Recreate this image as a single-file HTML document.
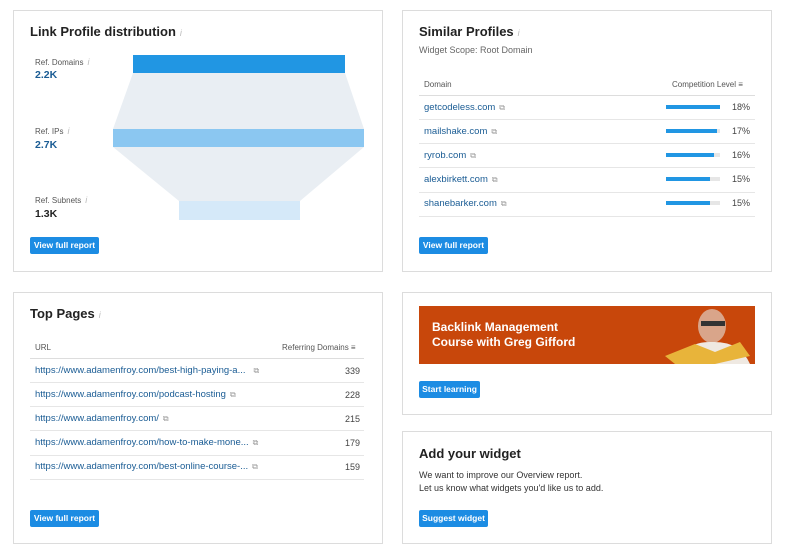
<!DOCTYPE html>
<html><head><style>
*{margin:0;padding:0;box-sizing:border-box}
body{width:790px;height:560px;background:#fff;font-family:"Liberation Sans",sans-serif;color:#333;position:relative;overflow:hidden}
.card{position:absolute;border:1px solid #dcdcdc;background:#fff}
.a{position:absolute;white-space:nowrap}
.t{font-size:13px;font-weight:bold;color:#222}
.i{color:#bbb;font-size:9px;font-style:italic;font-weight:normal;margin-left:4px}
.btn{position:absolute;background:#1c8ce3;color:#fff;font-size:8.5px;font-weight:bold;border-radius:2px;text-align:center;line-height:17px;height:17px}
.s{font-size:8px;color:#555}
.v{font-size:10.5px;font-weight:bold;color:#1a5c94}
.lk{font-size:9.5px;color:#1a5c94}
.ln{position:absolute;height:1px;background:#e6e6e6}
.ex{color:#999;font-size:8px;margin-left:4px}
.n{font-size:9px;color:#444;text-align:right}
</style></head><body>

<div class="card" style="left:13px;top:10px;width:370px;height:262px"></div>
<div class="a t" style="left:30px;top:24px">Link Profile distribution<span class="i">i</span></div>
<div class="a s" style="left:35px;top:57px">Ref. Domains<span class="i">i</span></div>
<div class="a v" style="left:35px;top:69px">2.2K</div>
<div class="a s" style="left:35px;top:126px">Ref. IPs<span class="i">i</span></div>
<div class="a v" style="left:35px;top:139px">2.7K</div>
<div class="a s" style="left:35px;top:195px">Ref. Subnets<span class="i">i</span></div>
<div class="a v" style="left:35px;top:208px;color:#222">1.3K</div>
<svg class="a" style="left:0;top:0" width="400" height="280">
<polygon points="133,73 345,73 364,129 113,129" fill="#e9eef3"/>
<polygon points="113,147 364,147 300,201 179,201" fill="#e9eef3"/>
<rect x="133" y="55" width="212" height="18" fill="#2196e3"/>
<rect x="113" y="129" width="251" height="18" fill="#8bc7f1"/>
<rect x="179" y="201" width="121" height="19" fill="#d5e9f9"/>
</svg>
<div class="btn" style="left:30px;top:237px;width:69px">View full report</div>

<div class="card" style="left:402px;top:10px;width:370px;height:262px"></div>
<div class="a t" style="left:419px;top:24px">Similar Profiles<span class="i">i</span></div>
<div class="a" style="left:419px;top:45px;font-size:9px;color:#666">Widget Scope: Root Domain</div>
<div class="a s" style="left:424px;top:80px">Domain</div>
<div class="a s" style="left:672px;top:80px">Competition Level ≡</div>
<div class="ln" style="left:419px;top:95px;width:336px;background:#ddd"></div>
<div class="a lk" style="left:424px;top:102px">getcodeless.com<span class="ex">⧉</span></div>
<div class="a lk" style="left:424px;top:126px">mailshake.com<span class="ex">⧉</span></div>
<div class="a lk" style="left:424px;top:150px">ryrob.com<span class="ex">⧉</span></div>
<div class="a lk" style="left:424px;top:174px">alexbirkett.com<span class="ex">⧉</span></div>
<div class="a lk" style="left:424px;top:198px">shanebarker.com<span class="ex">⧉</span></div>
<div class="ln" style="left:419px;top:119px;width:336px"></div>
<div class="ln" style="left:419px;top:143px;width:336px"></div>
<div class="ln" style="left:419px;top:167px;width:336px"></div>
<div class="ln" style="left:419px;top:192px;width:336px"></div>
<div class="ln" style="left:419px;top:216px;width:336px"></div>
<svg class="a" style="left:666px;top:0" width="60" height="220">
<rect x="0" y="105" width="54" height="4" fill="#e6e6e6"/><rect x="0" y="105" width="54" height="4" fill="#2196e3"/>
<rect x="0" y="129" width="54" height="4" fill="#e6e6e6"/><rect x="0" y="129" width="51" height="4" fill="#2196e3"/>
<rect x="0" y="153" width="54" height="4" fill="#e6e6e6"/><rect x="0" y="153" width="48" height="4" fill="#2196e3"/>
<rect x="0" y="177" width="54" height="4" fill="#e6e6e6"/><rect x="0" y="177" width="44" height="4" fill="#2196e3"/>
<rect x="0" y="201" width="54" height="4" fill="#e6e6e6"/><rect x="0" y="201" width="44" height="4" fill="#2196e3"/>
</svg>
<div class="a n" style="left:725px;top:102px;width:25px">18%</div>
<div class="a n" style="left:725px;top:126px;width:25px">17%</div>
<div class="a n" style="left:725px;top:150px;width:25px">16%</div>
<div class="a n" style="left:725px;top:174px;width:25px">15%</div>
<div class="a n" style="left:725px;top:198px;width:25px">15%</div>
<div class="btn" style="left:419px;top:237px;width:69px">View full report</div>

<div class="card" style="left:13px;top:292px;width:370px;height:252px"></div>
<div class="a t" style="left:30px;top:306px">Top Pages<span class="i">i</span></div>
<div class="a s" style="left:35px;top:343px">URL</div>
<div class="a s" style="left:282px;top:343px">Referring Domains ≡</div>
<div class="ln" style="left:30px;top:358px;width:334px;background:#ddd"></div>
<div class="a lk" style="left:35px;top:365px">https://www.adamenfroy.com/best-high-paying-a...<span class="ex" style="margin-left:8px">⧉</span></div>
<div class="a lk" style="left:35px;top:389px">https://www.adamenfroy.com/podcast-hosting<span class="ex">⧉</span></div>
<div class="a lk" style="left:35px;top:413px">https://www.adamenfroy.com/<span class="ex">⧉</span></div>
<div class="a lk" style="left:35px;top:437px">https://www.adamenfroy.com/how-to-make-mone...<span class="ex">⧉</span></div>
<div class="a lk" style="left:35px;top:461px">https://www.adamenfroy.com/best-online-course-...<span class="ex">⧉</span></div>
<div class="ln" style="left:30px;top:382px;width:334px"></div>
<div class="ln" style="left:30px;top:406px;width:334px"></div>
<div class="ln" style="left:30px;top:430px;width:334px"></div>
<div class="ln" style="left:30px;top:455px;width:334px"></div>
<div class="ln" style="left:30px;top:479px;width:334px"></div>
<div class="a n" style="left:330px;top:366px;width:30px">339</div>
<div class="a n" style="left:330px;top:390px;width:30px">228</div>
<div class="a n" style="left:330px;top:414px;width:30px">215</div>
<div class="a n" style="left:330px;top:438px;width:30px">179</div>
<div class="a n" style="left:330px;top:462px;width:30px">159</div>
<div class="btn" style="left:30px;top:510px;width:69px">View full report</div>

<div class="card" style="left:402px;top:292px;width:370px;height:123px"></div>
<div class="a" style="left:419px;top:306px;width:336px;height:58px;background:#c8470b"></div>
<div class="a" style="left:432px;top:320px;font-size:12px;font-weight:bold;color:#fff;line-height:15px">Backlink Management<br>Course with Greg Gifford</div>
<svg class="a" style="left:655px;top:306px" width="100" height="58">
<ellipse cx="57" cy="20" rx="14" ry="17" fill="#d9a58a"/>
<path d="M25 58 Q30 35 57 36 Q85 35 95 58Z" fill="#efe9e2"/>
<path d="M10 50 L40 38 L60 46 L85 36 L95 50 L60 58 L20 58Z" fill="#e8b43a"/>
<rect x="46" y="15" width="24" height="5" fill="#333"/>
</svg>
<div class="btn" style="left:419px;top:381px;width:61px">Start learning</div>

<div class="card" style="left:402px;top:431px;width:370px;height:113px"></div>
<div class="a t" style="left:419px;top:446px">Add your widget</div>
<div class="a" style="left:419px;top:469px;font-size:9px;color:#333;line-height:13px">We want to improve our Overview report.<br>Let us know what widgets you'd like us to add.</div>
<div class="btn" style="left:419px;top:510px;width:69px">Suggest widget</div>
</body></html>
